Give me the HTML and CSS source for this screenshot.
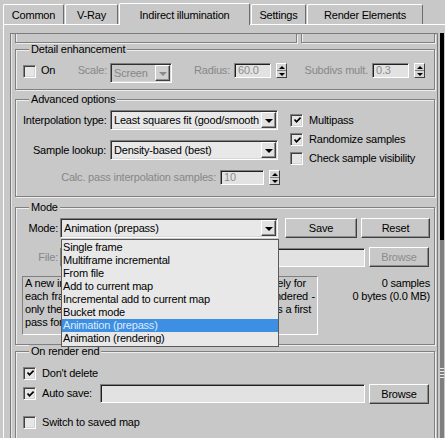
FILE: index.html
```html
<!DOCTYPE html>
<html>
<head>
<meta charset="utf-8">
<link rel="stylesheet" href="styles.css">
</head>
<body>
<div class="win">
  <div class="tabs">
    <div class="tab t-common">Common</div>
    <div class="tab t-vray">V-Ray</div>
    <div class="tab active t-ind">Indirect illumination</div>
    <div class="tab t-settings">Settings</div>
    <div class="tab t-re">Render Elements</div>
  </div>
  <div class="body">
    <div class="rollout">
      <div class="prev">
        <div class="pbox pbox-l"></div>
        <div class="pbox pbox-r"></div>
      </div>

      <div class="group g-detail">
        <div class="glabel">Detail enhancement</div>
        <div class="row r-detail">
          <span class="cb"></span>
          <span class="lbl on">On</span>
          <span class="lbl dis scale">Scale:</span>
          <div class="select sel-screen disabled"><span class="stext">Screen</span><span class="arrow"><i class="tri"></i></span></div>
          <span class="lbl dis radius">Radius:</span>
          <div class="input in-small dis">60.0</div>
          <div class="spin"><span class="sp up"><i class="tup"></i></span><span class="sp dn"><i class="tdn"></i></span></div>
          <span class="lbl dis subdivs">Subdivs mult.</span>
          <div class="input in-small dis">0.3</div>
          <div class="spin"><span class="sp up"><i class="tup"></i></span><span class="sp dn"><i class="tdn"></i></span></div>
        </div>
      </div>

      <div class="group g-adv">
        <div class="glabel">Advanced options</div>
        <div class="adv-cols">
          <div class="adv-left">
            <div class="row r-interp">
              <span class="lbl lw83">Interpolation type:</span>
              <div class="select sel-wide"><span class="stext">Least squares fit (good/smooth</span><span class="arrow"><i class="tri"></i></span></div>
            </div>
            <div class="row r-lookup">
              <span class="lbl lw83">Sample lookup:</span>
              <div class="select sel-wide"><span class="stext">Density-based (best)</span><span class="arrow"><i class="tri"></i></span></div>
            </div>
            <div class="row r-calc">
              <span class="lbl dis lw194">Calc. pass interpolation samples:</span>
              <div class="input in-calc dis">10</div>
              <div class="spin"><span class="sp up"><i class="tup"></i></span><span class="sp dn"><i class="tdn"></i></span></div>
            </div>
          </div>
          <div class="adv-right">
            <div class="crow cr1"><span class="cb checked"><svg viewBox="0 0 9 9" width="9" height="9"><path d="M1.5 3.5 L3.5 5.8 L7.6 1.6" fill="none" stroke="#000" stroke-width="1.7"/></svg></span><span class="lbl">Multipass</span></div>
            <div class="crow"><span class="cb checked"><svg viewBox="0 0 9 9" width="9" height="9"><path d="M1.5 3.5 L3.5 5.8 L7.6 1.6" fill="none" stroke="#000" stroke-width="1.7"/></svg></span><span class="lbl">Randomize samples</span></div>
            <div class="crow"><span class="cb"></span><span class="lbl">Check sample visibility</span></div>
          </div>
        </div>
      </div>

      <div class="group g-mode">
        <div class="glabel">Mode</div>
        <div class="row r-mode">
          <span class="lbl lw35">Mode:</span>
          <div class="select sel-mode"><span class="stext">Animation (prepass)</span><span class="arrow"><i class="tri"></i></span></div>
          <div class="btn b-save">Save</div>
          <div class="btn b-reset">Reset</div>
        </div>
        <div class="row r-file">
          <span class="lbl dis lw35">File:</span>
          <div class="input in-file"></div>
          <div class="btn b-browse dis">Browse</div>
        </div>
        <div class="row r-desc">
          <div class="desc">
            <div class="dl dl1">A new irradiance map is computed and saved separately for</div>
            <div class="dl dl2">each frame and saved to the given file. Nothing is rendered -</div>
            <div class="dl dl3">only the irradiance map is computed. Use this mode as a first</div>
            <div class="dl">pass for animation rendering.</div>
          </div>
          <div class="stats">
            <div>0 samples</div>
            <div>0 bytes (0.0 MB)</div>
          </div>
        </div>
      </div>

      <div class="group g-end">
        <div class="glabel">On render end</div>
        <div class="crow er1"><span class="cb checked"><svg viewBox="0 0 9 9" width="9" height="9"><path d="M1.5 3.5 L3.5 5.8 L7.6 1.6" fill="none" stroke="#000" stroke-width="1.7"/></svg></span><span class="lbl">Don't delete</span></div>
        <div class="crow er2"><span class="cb checked"><svg viewBox="0 0 9 9" width="9" height="9"><path d="M1.5 3.5 L3.5 5.8 L7.6 1.6" fill="none" stroke="#000" stroke-width="1.7"/></svg></span><span class="lbl autosave">Auto save:</span><div class="input in-auto"></div><div class="btn b-browse2">Browse</div></div>
        <div class="crow er3"><span class="cb"></span><span class="lbl">Switch to saved map</span></div>
      </div>
    </div>
    <div class="scrollbar">
      <div class="sb-track"></div>
      <div class="sb-rest"><span class="grip"></span></div>
    </div>
  </div>

  <ul class="droplist">
    <li>Single frame</li>
    <li>Multiframe incremental</li>
    <li>From file</li>
    <li>Add to current map</li>
    <li>Incremental add to current map</li>
    <li>Bucket mode</li>
    <li class="hl">Animation (prepass)</li>
    <li>Animation (rendering)</li>
  </ul>
</div>
</body>
</html>
```

FILE: styles.css
```css
* { box-sizing: border-box; margin: 0; padding: 0; }
body {
  margin: 0;
  background: #c8c8c8;
  font-family: "Liberation Sans", Arial, sans-serif;
  font-size: 11px;
  letter-spacing: -0.2px;
  color: #000;
}
.win {
  width: 445px;
  height: 438px;
  overflow: hidden;
  position: relative;
  background: #c8c8c8;
}

/* tabs */
.tabs {
  display: flex;
  align-items: flex-end;
  height: 24px;
  padding-left: 3px;
}
.tab {
  height: 20px;
  border-top: 1px solid #fff;
  border-left: 1px solid #fff;
  border-right: 1px solid #6c6c6c;
  border-radius: 2px 2px 0 0;
  display: flex;
  align-items: center;
  justify-content: center;
  padding-top: 1px;
  background: #c8c8c8;
}
.t-common { width: 61px; }
.t-vray { width: 53px; margin-left: 1px; }
.t-ind { width: 131px; margin-left: 1px; }
.t-settings { width: 55px; margin-left: 1px; }
.t-re { width: 116px; margin-left: 1px; }
.tab.active {
  height: 22px;
  margin-bottom: -1px;
  position: relative;
  z-index: 2;
  padding-top: 0;
}

/* body */
.body {
  display: flex;
  height: 414px;
  margin-left: 3px;
  border-top: 1px solid #fff;
  border-left: 1px solid #fff;
  padding-top: 8px;
}
.rollout {
  width: 428px;
  flex: none;
  margin-left: 6px;
  border-left: 1px solid #7c7c7c;
  border-top: 1px solid #7c7c7c;
  border-right: 1px solid #7c7c7c;
  box-shadow: inset 1px 0 0 #e6e6e6;
}
.prev {
  display: flex;
  height: 9px;
  margin-left: 4px;
}
.pbox {
  height: 9px;
  border: 1px solid #808080;
  border-top: none;
  box-shadow: 1px 1px 0 #eeeeee, inset 1px 0 0 #eeeeee;
}
.pbox-l { width: 282px; }
.pbox-r { width: 134px; margin-left: 4px; }

/* group boxes */
.group {
  width: 420px;
  margin-left: 4px;
  border: 1px solid #808080;
  box-shadow: 1px 1px 0 #eeeeee, inset 1px 1px 0 #eeeeee;
  padding-left: 7px;
  padding-right: 4px;
}
.glabel {
  width: max-content;
  height: 13px;
  line-height: 13px;
  margin: -7px 0 -6px 6px;
  padding: 0 2px;
  background: #c8c8c8;
}
.g-detail { margin-top: 6px; height: 41px; }
.g-adv { margin-top: 9px; height: 98px; }
.g-mode { margin-top: 10px; height: 138px; }
.g-end { margin-top: 6px; height: 120px; }

.row { display: flex; align-items: center; }
.lbl { white-space: nowrap; line-height: 13px; }
.dis { color: #878787; }

/* checkbox */
.cb {
  width: 13px;
  height: 13px;
  flex: none;
  border-top: 1px solid #808080;
  border-left: 1px solid #808080;
  border-right: 1px solid #fff;
  border-bottom: 1px solid #fff;
  box-shadow: inset 1px 1px 0 #404040, inset -1px -1px 0 #d4d4d4;
  background: #e6e6e6;
  display: flex;
  align-items: center;
  justify-content: center;
  padding: 1px 0 0 1px;
}
.cb svg { display: block; }

/* detail row */
.r-detail { margin-top: 13px; align-items: flex-start; height: 20px; }
.r-detail .cb { margin-top: 2px; }
.r-detail .lbl { line-height: 15px; }
.on { margin-left: 5px; width: 24px; }
.scale { width: 42px; text-align: right; margin-right: 3px; }
.radius { width: 58px; text-align: right; margin-right: 4px; }
.subdivs { width: 81px; text-align: right; margin-right: 4px; }

/* select */
.select {
  height: 20px;
  flex: none;
  display: flex;
  align-items: center;
  border-top: 1px solid #808080;
  border-left: 1px solid #808080;
  border-right: 1px solid #fff;
  border-bottom: 1px solid #fff;
  box-shadow: inset 1px 1px 0 #303030, inset -1px -1px 0 #d8d8d8;
  background: #e8e8e8;
  padding: 1px 1px 1px 3px;
  overflow: hidden;
}
.stext { flex: 1; white-space: nowrap; overflow: hidden; line-height: 16px; }
.arrow {
  width: 15px;
  height: 16px;
  flex: none;
  margin-left: 1px;
  border-top: 1px solid #fff;
  border-left: 1px solid #fff;
  border-right: 1px solid #404040;
  border-bottom: 1px solid #404040;
  box-shadow: inset -1px -1px 0 #909090;
  background: #e2e2e2;
  display: flex;
  align-items: center;
  justify-content: center;
}
.tri {
  width: 0; height: 0;
  border-left: 4px solid transparent;
  border-right: 4px solid transparent;
  border-top: 4px solid #000;
  margin-top: 1px;
}
.select.disabled { background: #c8c8c8; color: #878787; }
.select.disabled .arrow { background: #d0d0d0; }
.select.disabled .tri { border-top-color: #8a8a8a; }
.sel-screen { width: 62px; }
.sel-wide { width: 168px; }
.sel-mode { width: 218px; }

/* inputs */
.input {
  height: 15px;
  flex: none;
  border-top: 1px solid #808080;
  border-left: 1px solid #808080;
  border-right: 1px solid #fff;
  border-bottom: 1px solid #fff;
  box-shadow: inset 1px 1px 0 #202020;
  background: #e2e2e2;
  padding-left: 3px;
  line-height: 13px;
}
.in-small { width: 37px; }
.in-calc { width: 44px; }
.input.dis { color: #8c8c8c; }

/* spinner */
.spin {
  width: 11px;
  height: 15px;
  margin-left: 5px;
  flex: none;
  display: flex;
  flex-direction: column;
  border-top: 1px solid #fff;
  border-left: 1px solid #fff;
  border-right: 1px solid #404040;
  border-bottom: 1px solid #404040;
  background: #d6d6d6;
}
.sp { flex: 1; display: flex; align-items: center; justify-content: center; }
.sp.up { border-bottom: 1px solid #808080; }
.tup { width: 0; height: 0; border-left: 3px solid transparent; border-right: 3px solid transparent; border-bottom: 3px solid #000; }
.tdn { width: 0; height: 0; border-left: 3px solid transparent; border-right: 3px solid transparent; border-top: 3px solid #000; }

/* advanced */
.adv-cols { display: flex; }
.adv-left { width: 257px; flex: none; }
.adv-right { margin-left: 10px; padding-top: 10px; }
.lw83 { width: 83px; text-align: right; margin-right: 4px; }
.lw194 { width: 194px; text-align: right; margin-right: 4px; }
.lw35 { width: 35px; text-align: right; margin-right: 2px; }
.r-interp { margin-top: 10px; height: 20px; }
.r-lookup { margin-top: 10px; height: 20px; }
.r-calc { margin-top: 10px; height: 15px; }
.crow { display: flex; align-items: center; height: 19px; }
.crow .lbl { margin-left: 6px; }
.cr1 { height: 20px; }

/* mode */
.r-mode { margin-top: 10px; height: 20px; }
.btn {
  height: 20px;
  display: flex;
  align-items: center;
  justify-content: center;
  border-top: 1px solid #fff;
  border-left: 1px solid #fff;
  border-right: 1px solid #404040;
  border-bottom: 1px solid #404040;
  box-shadow: inset -1px -1px 0 #8c8c8c;
  background: #c8c8c8;
  flex: none;
}
.b-save { width: 72px; margin-left: 7px; }
.b-reset { width: 69px; margin-left: 4px; }
.r-file { margin-top: 9px; height: 20px; }
.in-file { width: 305px; height: 19px; }
.b-browse { width: 60px; margin-left: 4px; }
.btn.dis { color: #8c8c8c; }
.r-desc { margin-top: 9px; align-items: flex-start; }
.desc {
  width: 296px;
  height: 59px;
  margin-left: -1px;
  border-top: 1px solid #808080;
  border-left: 1px solid #808080;
  border-right: 1px solid #fff;
  border-bottom: 1px solid #fff;
  padding: 0 0 0 2px;
  line-height: 13px;
  flex: none;
}
.dl { white-space: nowrap; height: 13px; }
.dl1, .dl2, .dl3 { text-align: justify; text-align-last: justify; }
.dl1 { width: 281px; }
.dl2 { width: 290px; }
.dl3 { width: 286px; }
.stats { flex: 1; text-align: right; line-height: 13px; padding-top: 1px; }

/* render end */
.er1 { margin-top: 11px; height: 20px; }
.er2 { margin-top: 1px; height: 19px; }
.autosave { width: 52px; margin-right: 6px; }
.in-auto { width: 265px; height: 19px; }
.b-browse2 { width: 60px; margin-left: 4px; }
.er3 { margin-top: 9px; height: 20px; }

/* scrollbar */
.scrollbar {
  width: 6px;
  margin-left: 2px;
  display: flex;
  flex-direction: column;
}
.sb-track { height: 207px; width: 4px; background: #000; flex: none; }
.sb-rest { flex: 1; width: 4px; background: #7e7e7e; }
.grip {
  display: block;
  margin-top: 128px;
  width: 4px;
  height: 11px;
  background: repeating-linear-gradient(#e8e8e8 0 1px, #7e7e7e 1px 3px);
}

/* dropdown list (overlay) */
.droplist {
  position: absolute;
  left: 61px;
  top: 239px;
  width: 218px;
  list-style: none;
  background: #e8e8e8;
  border: 1px solid #5a5a5a;
  padding: 1px 0 1px 0;
  z-index: 5;
}
.droplist li {
  height: 13px;
  line-height: 13px;
  padding-left: 1px;
  white-space: nowrap;
}
.droplist li.hl { background: #3d8fe4; color: #dfeaf6; }
```
